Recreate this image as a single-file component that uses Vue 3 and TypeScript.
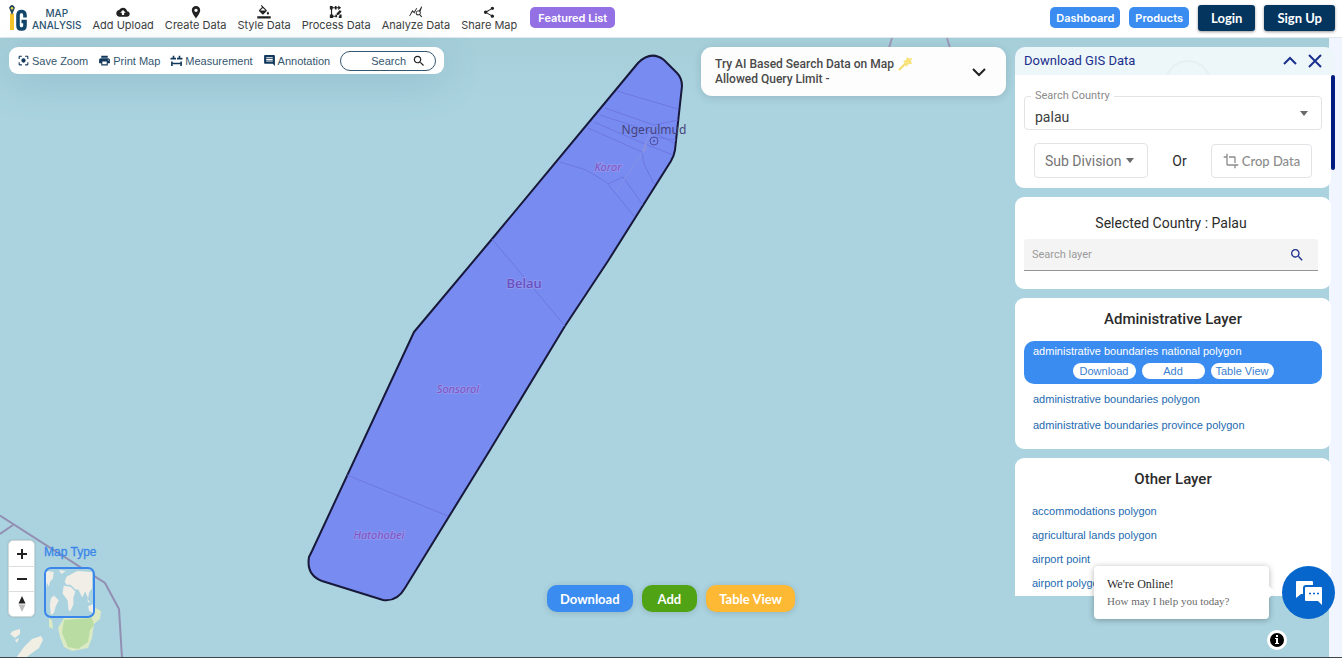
<script setup lang="ts">
import { ref } from 'vue'

interface Item {
  label: string
  icon: string
}

const navItems: Item[] = [
  { label: 'Add Upload', icon: 'M19.35 10.04C18.67 6.59 15.64 4 12 4 9.11 4 6.6 5.64 5.35 8.04 2.34 8.36 0 10.91 0 14c0 3.31 2.69 6 6 6h13c2.76 0 5-2.24 5-5 0-2.64-2.05-4.78-4.65-4.96zM14 13v4h-4v-4H7l5-5 5 5h-3z' },
  { label: 'Create Data', icon: 'M12 1C7.6 1 4.5 4.2 4.500 8.500 4.500 14 12 23 12 23s7.500-9 7.500-14.500C19.500 4.200 16.400 1 12 1zm0 10.500a3 3 0 1 1 0-6 3 3 0 0 1 0 6z' },
  { label: 'Style Data', icon: 'M16.560 7.940 7.620-1 6.210.410l2.380 2.380-5.150 5.150a1.490 1.490 0 0 0 0 2.120l5.500 5.500c.29.29.68.440 1.060.440s.770-.150 1.060-.440l5.500-5.500c.590-.580.590-1.530 0-2.120zM5.210 9 10 4.210 14.790 9H5.210zM19 10.500s-2 2.170-2 3.500c0 1.100.900 2 2 2s2-.900 2-2c0-1.330-2-3.500-2-3.500zM0 19h24v4H0z' },
  { label: 'Process Data', icon: 'M1 1h5v2h4V1h3v2h3V0l5 4-5 4V5h-3v2h-3V5H6v2H5v9h2v2h4v-2h3v5h-3v-1H7v2H1v-6h2V7H1zM13 14l6-6 3 3-6 6h-3zM18 16h4v6h-5v-3h1z' },
  { label: 'Analyze Data', icon: 'M20 10.500 23 2l-1.500-.5-4 7.500a4.700 4.700 0 0 0-5 7.500 4.700 4.700 0 0 0 5.500.5l3.500 4 1.500-1.500-3.500-3.500a4.700 4.700 0 0 0 .5-5.500zM16 16a3 3 0 1 1 0-6 3 3 0 0 1 0 6zM1 19l5-8 3 3 5-9-1.300-.8L8.500 11 5.500 8 0 18z' },
  { label: 'Share Map', icon: 'M18 16.080c-.760 0-1.440.300-1.960.770L8.910 12.700c.050-.230.090-.460.090-.700s-.040-.470-.090-.700l7.050-4.110c.540.500 1.250.810 2.040.810 1.660 0 3-1.340 3-3s-1.340-3-3-3-3 1.340-3 3c0 .240.040.470.090.700L8.040 9.810C7.500 9.310 6.790 9 6 9c-1.660 0-3 1.340-3 3s1.340 3 3 3c.790 0 1.500-.310 2.040-.810l7.120 4.160c-.050.210-.080.430-.080.650 0 1.610 1.310 2.920 2.920 2.920s2.920-1.310 2.920-2.920-1.310-2.920-2.920-2.920z' },
]

const tools: Item[] = [
  { label: 'Save Zoom', icon: 'M5 15H3v4c0 1.100.900 2 2 2h4v-2H5v-4zM5 5h4V3H5c-1.100 0-2 .900-2 2v4h2V5zm14-2h-4v2h4v4h2V5c0-1.100-.900-2-2-2zm0 16h-4v2h4c1.100 0 2-.900 2-2v-4h-2v4zM12 8a4 4 0 1 0 0 8 4 4 0 0 0 0-8z' },
  { label: 'Print Map', icon: 'M19 8H5c-1.660 0-3 1.340-3 3v6h4v4h12v-4h4v-6c0-1.660-1.340-3-3-3zm-3 11H8v-5h8v5zm3-7c-.550 0-1-.450-1-1s.450-1 1-1 1 .450 1 1-.450 1-1 1zm-1-9H6v4h12V3z' },
  { label: 'Measurement', icon: 'M5 3h3v4h3v3H1V7h4zM16 3h3v4h4v3H13V7h3zM2 14h3v2h14v-2h3v8h-3v-3H5v3H2z' },
  { label: 'Annotation', icon: 'M21.990 4c0-1.100-.890-2-1.990-2H4c-1.100 0-2 .900-2 2v12c0 1.100.900 2 2 2h14l4 4-.010-18zM18 14H6v-2h12v2zm0-3H6V9h12v2zm0-3H6V6h12v2z' },
]

const magnifier =
  'M15.500 14h-.790l-.280-.270C15.410 12.590 16 11.110 16 9.500 16 5.910 13.090 3 9.500 3S3 5.910 3 9.500 5.910 16 9.500 16c1.610 0 3.090-.590 4.230-1.570l.270.280v.790l5 4.990L20.490 19l-4.990-5zm-6 0C7.010 14 5 11.990 5 9.500S7.010 5 9.500 5 14 7.010 14 9.500 11.990 14 9.500 14z'

const country = ref('palau')
const adminLayers = ['administrative boundaries national polygon', 'administrative boundaries polygon', 'administrative boundaries province polygon']
const otherLayers = ['accommodations polygon', 'agricultural lands polygon', 'airport point', 'airport polygon']
const selected = ref(adminLayers[0])
const actions = ['Download', 'Add', 'Table View']
</script>

<template>
  <div class="page">
    <header class="topbar">
      <a href="#" class="brand">
        <svg class="logo" viewBox="0 0 20 26" aria-hidden="true">
          <path d="M1 8.500h4V25H1z" fill="#f6c52c" />
          <path d="M3 10 .8 4.500a2.700 2.700 0 1 1 4.400 0z" fill="#23455a" />
          <circle cx="3" cy="3.200" r="1.200" fill="#f2e04a" />
          <path d="M16 12.500V10.500Q16 6.500 13 6.500H12Q9 6.500 9 10.500V20.500Q9 24 12 24H13Q16 24 16 20.500V16.500H12.500" fill="none" stroke="#12466b" stroke-width="3.600" />
        </svg>
        <span class="brand-text">MAP<br />ANALYSIS</span>
      </a>
      <nav class="nav">
        <a v-for="n in navItems" :key="n.label" href="#" class="nav-item">
          <svg viewBox="0 -1 24 25" aria-hidden="true"><path :d="n.icon" fill-rule="evenodd" /></svg>
          <span>{{ n.label }}</span>
        </a>
      </nav>
      <button class="chip purple">Featured List</button>
      <div class="account">
        <button class="chip">Dashboard</button>
        <button class="chip">Products</button>
        <button class="auth">Login</button>
        <button class="auth">Sign Up</button>
      </div>
    </header>

    <main class="map">
      <svg class="canvas" viewBox="0 0 1342 620" preserveAspectRatio="xMinYMin slice" role="img" aria-label="Map of Palau">
        <g transform="translate(0 -38)">
          <g fill="#f1eee4">
            <path d="M16 658 24 647 32 639 41 636 43 640 39 648 28 656 26 658z" />
            <path d="M13 631 20 629 20 634 15 638 10 634zM15 640 19 638 17 643z" />
          </g>
          <path d="M49 618 52 620 53 629 49 627zM58 628 65 616 92 606 101 611 100 619 94 624 92 638 88 648 72 651 64 647 60 637z" fill="#dbeac3" />
          <path d="M64 620 92 618 94 625 90 630 88 642 78 649 68 647 62 633z" fill="#b9dca2" />
          <path d="M0 515.500 105 583 119 609 122 658M0 534 13 525" fill="none" stroke="#938fb2" stroke-width="2" />
          <path d="M892 38 889 48M947 38 950 48" fill="none" stroke="#9b98b9" stroke-width="2" />
          <path
            d="M638 63Q651 50 664 60L677 73Q682 78 682 86L675 150Q674 156 671 161L608 261 565 326 490 450 405 588Q397 602 383 600L322 581Q306 575 309 557L312 551 414 332 492 239z"
            fill="#778bf0" stroke="#17183a" stroke-width="2" stroke-linejoin="round"
          />
          <g fill="none" stroke="#6b73df" stroke-width="1" opacity=".8">
            <path d="M617 91 678 109M605 108 654 125 678 120M600 115 652 132 674 143M594 122 640 142 673 155M588 128 642 152 644 164 654 184M560 162 586 170 606 182 634 216M608 184 623 177 643 205M653 137 676 140M492 239 565 326M347 475 448 516" />
          </g>
          <path d="M654 126 647 140 646 150 642 153 645 143zM642 154 634 165 616 192" fill="#9a92d3" stroke="#8995e8" stroke-width="1" opacity=".7" />
          <g class="labels" text-anchor="middle">
            <text x="654" y="134" class="city">Ngerulmud</text>
            <circle cx="654" cy="141" r="4" fill="none" stroke="#4f4d9c" />
            <circle cx="654" cy="141" r="1" fill="#4f4d9c" />
            <text x="524" y="288" class="nation">Belau</text>
            <text x="608" y="171" class="state">Koror</text>
            <text x="458" y="393" class="state">Sonsorol</text>
            <text x="379" y="539" class="state">Hatohobei</text>
          </g>
        </g>
      </svg>
      <div class="edge"></div>

      <div class="overlay">
        <div class="toolbar">
          <button v-for="t in tools" :key="t.label" class="tool">
            <svg viewBox="0 0 24 24" aria-hidden="true"><path :d="t.icon" fill-rule="evenodd" /></svg>
            {{ t.label }}
          </button>
          <label class="find">
            <input type="text" placeholder="Search" aria-label="Search" />
            <svg viewBox="0 0 24 24" aria-hidden="true"><path :d="magnifier" /></svg>
          </label>
        </div>

        <button class="ai">
          <span>
            Try AI Based Search Data on Map
            <svg class="wand" viewBox="0 0 16 16" aria-hidden="true">
              <path d="M2 14 9 7" stroke="#f3dc6b" stroke-width="2" />
              <path d="M10 1 12 2.500 15 2 14 5 15 8 12 8 9 11 8 7 6 5 9 4z" fill="#f8e37c" />
            </svg>
            <br />Allowed Query Limit -
          </span>
          <svg class="chev" viewBox="0 0 16 16" aria-hidden="true"><path d="M2 5 8 11 14 5" /></svg>
        </button>

        <aside class="panel">
          <div class="panel-head">
            <h2>Download GIS Data</h2>
            <svg class="ring" viewBox="0 0 48 16" aria-hidden="true"><circle cx="24" cy="24" r="22" /></svg>
            <button class="head-btn" aria-label="Collapse"><svg viewBox="0 0 16 16"><path d="M2 11 8 5 14 11" /></svg></button>
            <button class="head-btn" aria-label="Close"><svg viewBox="0 0 16 16"><path d="M2 2 14 14M14 2 2 14" /></svg></button>
          </div>
          <div class="panel-body">
            <section class="card first">
              <div class="field">
                <label for="country">Search Country</label>
                <input id="country" v-model="country" type="text" />
                <span class="caret"></span>
              </div>
              <div class="choice">
                <div class="sub">
                  <select aria-label="Sub Division"><option>Sub Division</option></select>
                  <span class="caret"></span>
                </div>
                <span class="or">Or</span>
                <button class="crop">
                  <svg viewBox="0 0 24 24" aria-hidden="true"><path d="M17 15h2V7c0-1.100-.900-2-2-2H9v2h8v8zM7 17V1H5v4H1v2h4v10c0 1.100.900 2 2 2h10v4h2v-4h4v-2H7z" /></svg>
                  Crop Data
                </button>
              </div>
            </section>
            <section class="card second">
              <h3 class="light">Selected Country : Palau</h3>
              <label class="layer-search">
                <input type="text" placeholder="Search layer" aria-label="Search layer" />
                <svg viewBox="0 0 24 24" aria-hidden="true"><path :d="magnifier" /></svg>
              </label>
            </section>
            <section class="card">
              <h3>Administrative Layer</h3>
              <ul class="layers">
                <li v-for="l in adminLayers" :key="l" :class="{ active: l === selected }">
                  <button class="layer" @click="selected = l">{{ l }}</button>
                  <div v-if="l === selected" class="mini">
                    <button v-for="a in actions" :key="a">{{ a }}</button>
                  </div>
                </li>
              </ul>
            </section>
            <section class="card other">
              <h3>Other Layer</h3>
              <ul class="layers">
                <li v-for="l in otherLayers" :key="l"><button class="layer" @click="selected = l">{{ l }}</button></li>
              </ul>
            </section>
          </div>
          <div class="thumb"></div>
        </aside>
      </div>

      <div class="map-left">
        <div class="zoom">
          <button aria-label="Zoom in"><svg viewBox="0 0 12 12"><path d="M6 1V11M1 6H11" /></svg></button>
          <button aria-label="Zoom out"><svg viewBox="0 0 12 12"><path d="M1 6H11" /></svg></button>
          <button aria-label="Reset north">
            <svg class="compass" viewBox="0 0 12 18"><path d="M6 1 9.500 8.500H2.500z" fill="#222" /><path d="M6 17 9.500 9.500H2.500z" fill="#bbb" /></svg>
          </button>
        </div>
        <div class="type">
          <span>Map Type</span>
          <button aria-label="World map">
            <svg viewBox="0 0 48 48" aria-hidden="true">
              <path fill="#f1eee7" d="M2 2 8 3 7 10 4 13 3 18 1 14 0 20V3zM5 30 8 27 13 32 10 38 8 45 5 47 4 37zM18 17 25 18 30 23 28 29 28 36 25 43 23 42 22 32 17 25zM19 13 21 8 28 4 32 2 47 3V20L44 24 43 30 40 23 37 29 33 21 30 21 25 16 21 16zM20 2 16 5 13 1zM42 30 45 34 43 34zM43 38 48 36V45L44 43z" />
            </svg>
          </button>
        </div>
      </div>

      <div class="map-actions">
        <button class="act blue">Download</button>
        <button class="act green">Add</button>
        <button class="act amber">Table View</button>
      </div>

      <div class="chat">
        <div class="bubble">
          <strong>We're Online!</strong>
          <span>How may I help you today?</span>
        </div>
        <button class="chat-btn" aria-label="Open chat">
          <svg viewBox="0 0 28 26" aria-hidden="true">
            <path d="M2 1H17Q18 1 18 2V5H11Q8 5 8 8V14H6L1 18V2Q1 1 2 1z" fill="#fff" />
            <path d="M11 7H26Q27 7 27 8V25L23 21H11Q10 21 10 20V8Q10 7 11 7z" fill="#fff" />
            <path d="M14 13.500h2M18 13.500h2M22 13.500h2" stroke="#0766cc" stroke-width="1.500" />
          </svg>
        </button>
      </div>
      <button class="info" aria-label="Attribution">
        <svg viewBox="0 0 20 20"><circle cx="10" cy="10" r="7" /><path d="M9 5h2v2H9zM8 8h3v5h1v1H8v-1h1V9H8z" fill="#fff" /></svg>
      </button>
    </main>
  </div>
</template>

<style>
body { margin: 0; }
</style>

<style scoped>
* { box-sizing: border-box; }
button, input, select { font: inherit; color: inherit; border: 0; background: none; padding: 0; margin: 0; }
button { cursor: pointer; white-space: nowrap; }
input, select { outline: 0; min-width: 0; }
h2, h3, ul { margin: 0; padding: 0; list-style: none; }
a { text-decoration: none; color: inherit; }
svg { display: block; flex: none; }

.page { height: 100vh; display: flex; flex-direction: column; font-family: Roboto, "Liberation Sans", sans-serif; border-bottom: 1px solid #3c4548; overflow: hidden; }

.topbar { flex: none; height: 38px; display: flex; align-items: center; padding: 0 7px 2px 9px; background: #fff; border-bottom: 1px solid #dfe9ec; }
.brand { display: flex; align-items: center; gap: 3px; color: #2b5470; }
.logo { width: 20px; height: 26px; }
.brand-text { font: 500 10px/12px Inter, sans-serif; text-align: center; padding-top: 3px; }
.nav { display: flex; gap: 11px; margin-left: 11px; }
.nav-item { display: flex; flex-direction: column; align-items: center; font: 11px/13px Inter, sans-serif; color: #3d3d3d; padding-top: 1px; }
.nav-item svg { width: 14px; height: 14px; fill: #222; }
.chip { height: 21px; padding: 0 6px; border-radius: 5px; background: #3a8cf0; color: #fff; font: 600 11px/20px Inter, sans-serif; }
.chip.purple { background: #9370e4; margin-left: 13px; padding: 0 8px; }
.account { margin-left: auto; display: flex; align-items: center; gap: 9px; }
.auth { height: 26px; padding: 0 13px; border-radius: 3px; background: #03355f; color: #fff; font: 700 13px/26px Lato, sans-serif; box-shadow: 0 1px 3px rgba(0, 0, 0, .4); }

.map { position: relative; flex: 1; min-height: 0; background: linear-gradient(#a5ced9, #aad3df 60px); }
.canvas { position: absolute; inset: 0; width: 100%; height: 100%; }
.edge { position: absolute; top: 0; right: 0; bottom: 0; width: 13px; background: #f0f5ff; }
.labels text { font-family: "Noto Sans", sans-serif; }
.city { font-size: 12px; fill: #46437c; }
.nation { font-size: 13px; font-weight: 500; fill: #6a4fc0; stroke: #8c96ee; stroke-width: 2px; paint-order: stroke; }
.state { font-size: 11px; font-style: italic; fill: #8452c4; stroke: #8c96ee; stroke-width: 2px; paint-order: stroke; }

.overlay { position: relative; height: 100%; display: flex; align-items: flex-start; padding: 9px 7px 61px 9px; }
.toolbar { display: flex; align-items: center; gap: 10px; height: 27px; padding: 0 8px; border-radius: 9px; background: #fff; color: #34566f; font: 11px/16px "Liberation Sans", sans-serif; box-shadow: 0 8px 40px rgba(60, 110, 130, .2); }
.tool { display: flex; align-items: center; gap: 2px; }
.tool svg { width: 13px; height: 13px; fill: #12395c; }
.find { display: flex; align-items: center; width: 96px; height: 20px; border: 1px solid #34566f; border-radius: 10px; padding: 0 9px 0 30px; }
.find input { flex: 1; width: 0; }
.find svg { width: 14px; height: 14px; fill: #222; }
input::placeholder { color: inherit; opacity: 1; }

.ai { display: flex; align-items: center; justify-content: space-between; width: 305px; height: 49px; margin-left: auto; padding: 0 19px 0 14px; border-radius: 11px; background: #fdfdfd; text-align: left; font-size: 12px; font-weight: 500; line-height: 15px; color: #4a4a4a; box-shadow: 0 2px 8px rgba(0, 0, 0, .12); }
.wand { display: inline-block; width: 16px; height: 16px; margin: -2px 0; vertical-align: middle; }
.chev { width: 16px; height: 16px; fill: none; stroke: #222; stroke-width: 2; }

.panel { position: relative; width: 320px; height: 100%; margin-left: 9px; display: flex; flex-direction: column; border-radius: 10px 10px 0 0; }
.panel-head { position: relative; flex: none; height: 28px; display: flex; align-items: center; gap: 9px; padding: 0 12px 0 9px; border-radius: 10px 10px 0 0; background: #edf6f9; color: #1b2f8c; }
.panel-head h2 { flex: 1; font-size: 13px; font-weight: 400; line-height: 20px; }
.ring { position: absolute; left: 149px; bottom: 0; width: 48px; height: 16px; fill: none; stroke: #e6eff2; stroke-width: 2; }
.head-btn svg { width: 16px; height: 16px; fill: none; stroke: #1b2f8c; stroke-width: 2; }
.panel-body { flex: 1; min-height: 0; overflow: hidden; display: flex; flex-direction: column; gap: 9px; padding-right: 4px; }
.card { flex: none; background: #fff; border-radius: 9px; padding: 11px 9px 11px; }
.card.first { border-radius: 0 0 9px 9px; padding: 21px 9px 10px; }
.card.second { padding: 16px 13px 18px 9px; }
.card h3 { font-size: 15px; font-weight: 500; line-height: 20px; text-align: center; color: #2b2b2b; margin-bottom: 12px; }
.card h3.light { font-size: 14px; font-weight: 400; margin-bottom: 6px; }
.field { position: relative; display: flex; align-items: center; height: 34px; border: 1px solid #e2e3e6; border-radius: 4px; padding: 8px 13px 0 10px; font-size: 14px; color: #3d3d3d; }
.field input { flex: 1; }
.field label { position: absolute; left: 6px; top: -8px; padding: 0 4px; background: #fff; font-size: 11px; line-height: 14px; color: #8a8a8a; }
.caret { border: 4px solid transparent; border-top: 5px solid #6b6b6b; border-bottom: 0; }
.field .caret { margin-bottom: 8px; }
.choice { display: flex; align-items: center; justify-content: space-between; padding: 13px 10px 0; }
.sub { position: relative; display: flex; align-items: center; width: 114px; height: 35px; border: 1px solid #e2e3e6; border-radius: 4px; color: #757575; font-size: 14px; }
.sub select { appearance: none; width: 100%; height: 100%; padding: 0 10px; }
.sub .caret { position: absolute; right: 13px; pointer-events: none; }
.or { font-size: 14px; color: #2b2b2b; }
.crop { display: flex; align-items: center; justify-content: center; gap: 3px; width: 101px; height: 34px; border: 1px solid #e2e3e6; border-radius: 4px; color: #8c8c8c; font: 500 13px/20px Lato, sans-serif; }
.crop svg { width: 16px; height: 16px; fill: #8c8c8c; }
.layer-search { display: flex; align-items: center; height: 32px; padding: 0 13px 0 8px; background: #f4f4f4; border-bottom: 1px solid #949494; border-radius: 3px 3px 0 0; font-size: 11px; color: #9a9a9a; }
.layer-search input { flex: 1; }
.layer-search svg { width: 16px; height: 16px; fill: #1b2f8c; }
.layers { display: flex; flex-direction: column; font: 11px/14px "Liberation Sans", sans-serif; color: #236ab0; }
.layers li { padding: 6px 9px; }
.layers li.active { padding: 3px 9px 5px; margin-bottom: 2px; border-radius: 10px; background: #3a8cf0; color: #fff; }
.other .layers { margin-top: -2px; }
.other .layers li { padding: 5px 8px; }
.layer { display: block; }
.mini { display: flex; justify-content: center; gap: 6px; margin-top: 5px; }
.mini button { min-width: 63px; height: 16px; padding: 0 5px; border-radius: 8px; background: #fff; color: #3a80d0; line-height: 16px; }
.thumb { position: absolute; right: 0; top: 28px; width: 4px; height: 95px; border-radius: 2px; background: #001c80; }

.map-left { position: absolute; left: 8px; bottom: 39px; display: flex; align-items: flex-end; gap: 9px; }
.zoom { width: 27px; margin-bottom: 1px; border-radius: 5px; background: #fff; border: 1px solid #d3d8da; box-shadow: 0 0 2px rgba(0, 0, 0, .2); }
.zoom button { display: flex; align-items: center; justify-content: center; width: 100%; height: 25px; }
.zoom button + button { border-top: 1px solid #ddd; }
.zoom svg { width: 12px; height: 12px; fill: none; stroke: #222; stroke-width: 2; }
.zoom .compass { height: 18px; stroke: none; }
.type { display: flex; flex-direction: column; gap: 7px; font: 500 12px/16px "Liberation Sans", sans-serif; color: #3a86ea; -webkit-text-stroke: 0.300px #3a86ea; }
.type button { width: 51px; height: 51px; border: 2px solid #3a86ea; border-radius: 7px; background: #aad3df; overflow: hidden; }
.type svg { width: 100%; height: 100%; }

.map-actions { position: absolute; left: 0; right: 0; bottom: 45px; display: flex; justify-content: center; gap: 9px; pointer-events: none; }
.act { pointer-events: auto; height: 27px; padding: 0 13px; border-radius: 10px; color: #fff; font: 700 13px/26px Lato, sans-serif; box-shadow: 0 1px 6px rgba(0, 0, 0, .15); }
.act.blue { background: #3a8cf0; }
.act.green { background: #51a316; padding: 0 16px; }
.act.amber { background: #fdb834; }

.chat { position: absolute; right: 7px; bottom: 38px; display: flex; gap: 13px; }
.bubble { position: relative; display: flex; flex-direction: column; justify-content: center; gap: 2px; width: 175px; height: 53px; padding: 0 13px; border-radius: 4px; background: #fff; font: 11px/15px "Liberation Serif", serif; color: #6b6b6b; box-shadow: 0 1px 6px rgba(0, 0, 0, .3); }
.bubble::after { content: ""; position: absolute; right: -6px; top: 20px; border: 6px solid transparent; border-left-color: #fff; border-right: 0; }
.bubble strong { font-size: 12px; font-weight: 400; color: #2b2b2b; }
.chat-btn { display: flex; align-items: center; justify-content: center; width: 53px; height: 53px; border-radius: 50%; background: #0766cc; }
.chat-btn svg { width: 28px; height: 26px; }
.info { position: absolute; right: 55px; bottom: 7px; width: 20px; height: 20px; border-radius: 50%; background: #fff; }
</style>
